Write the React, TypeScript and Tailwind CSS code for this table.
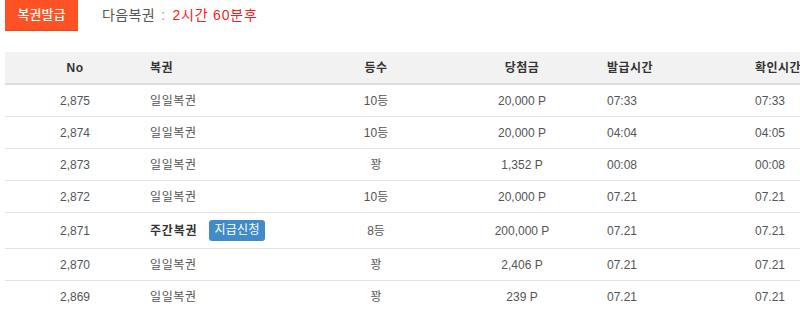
import React from "react";

type Row = {
  no: string;
  name: string;
  weekly?: boolean;
  rank: string;
  prize: string;
  issued: string;
  checked: string;
};

const rows: Row[] = [
  { no: "2,875", name: "일일복권", rank: "10등", prize: "20,000 P", issued: "07:33", checked: "07:33" },
  { no: "2,874", name: "일일복권", rank: "10등", prize: "20,000 P", issued: "04:04", checked: "04:05" },
  { no: "2,873", name: "일일복권", rank: "꽝", prize: "1,352 P", issued: "00:08", checked: "00:08" },
  { no: "2,872", name: "일일복권", rank: "10등", prize: "20,000 P", issued: "07.21", checked: "07.21" },
  { no: "2,871", name: "주간복권", weekly: true, rank: "8등", prize: "200,000 P", issued: "07.21", checked: "07.21" },
  { no: "2,870", name: "일일복권", rank: "꽝", prize: "2,406 P", issued: "07.21", checked: "07.21" },
  { no: "2,869", name: "일일복권", rank: "꽝", prize: "239 P", issued: "07.21", checked: "07.21" },
];

const font = { fontFamily: '"Liberation Sans", "Noto Sans CJK KR", sans-serif' };

export default function App() {
  return (
    <div className="w-[800px] h-[312px] overflow-hidden bg-white" style={font}>
      {/* top bar */}
      <div className="flex items-center pl-[5px] h-[31px]">
        <button className="w-[73px] h-[31px] bg-[#ff5224] text-white text-[13px] font-medium border-b border-[#e04a1f]">
          복권발급
        </button>
        <div className="ml-[24px] text-[14px] text-[#555] tracking-[0.4px] flex">
          <span>다음복권</span>
          <span className="ml-[6px] mr-[7px] text-[#999]">:</span>
          <span className="text-[#f51d1d] tracking-[0.8px]">2시간 60분후</span>
        </div>
      </div>

      {/* table */}
      <div className="mt-[21px] ml-[5px] w-[845px] text-[12px]">
        <div className="grid grid-cols-[140px_165px_132px_160px_148px_100px] h-[33px] items-center bg-[#f2f2f2] border-b-2 border-[#dedede] font-bold text-[#333] tracking-[0.5px]">
          <div className="text-center">No</div>
          <div className="pl-[5px]">복권</div>
          <div className="text-center">등수</div>
          <div className="text-center">당첨금</div>
          <div className="pl-[5px]">발급시간</div>
          <div className="pl-[5px]">확인시간</div>
        </div>
        {rows.map((r) => (
          <div
            key={r.no}
            className={
              "grid grid-cols-[140px_165px_132px_160px_148px_100px] items-center border-b border-[#e3e3e3] text-[#555] " +
              (r.weekly ? "h-[36px]" : "h-[32px]")
            }
          >
            <div className="text-center">{r.no}</div>
            <div className="pl-[5px] flex items-center">
              {r.weekly ? (
                <>
                  <span className="font-bold text-[#333] tracking-[0.8px]">{r.name}</span>
                  <span className="ml-[12px] px-[5px] h-[21px] leading-[21px] rounded-[3px] bg-[#428bca] text-white tracking-[0.3px]">
                    지급신청
                  </span>
                </>
              ) : (
                <span className="tracking-[0.6px]">{r.name}</span>
              )}
            </div>
            <div className="text-center">{r.rank}</div>
            <div className="text-center">{r.prize}</div>
            <div className="pl-[5px]">{r.issued}</div>
            <div className="pl-[5px]">{r.checked}</div>
          </div>
        ))}
      </div>
    </div>
  );
}
